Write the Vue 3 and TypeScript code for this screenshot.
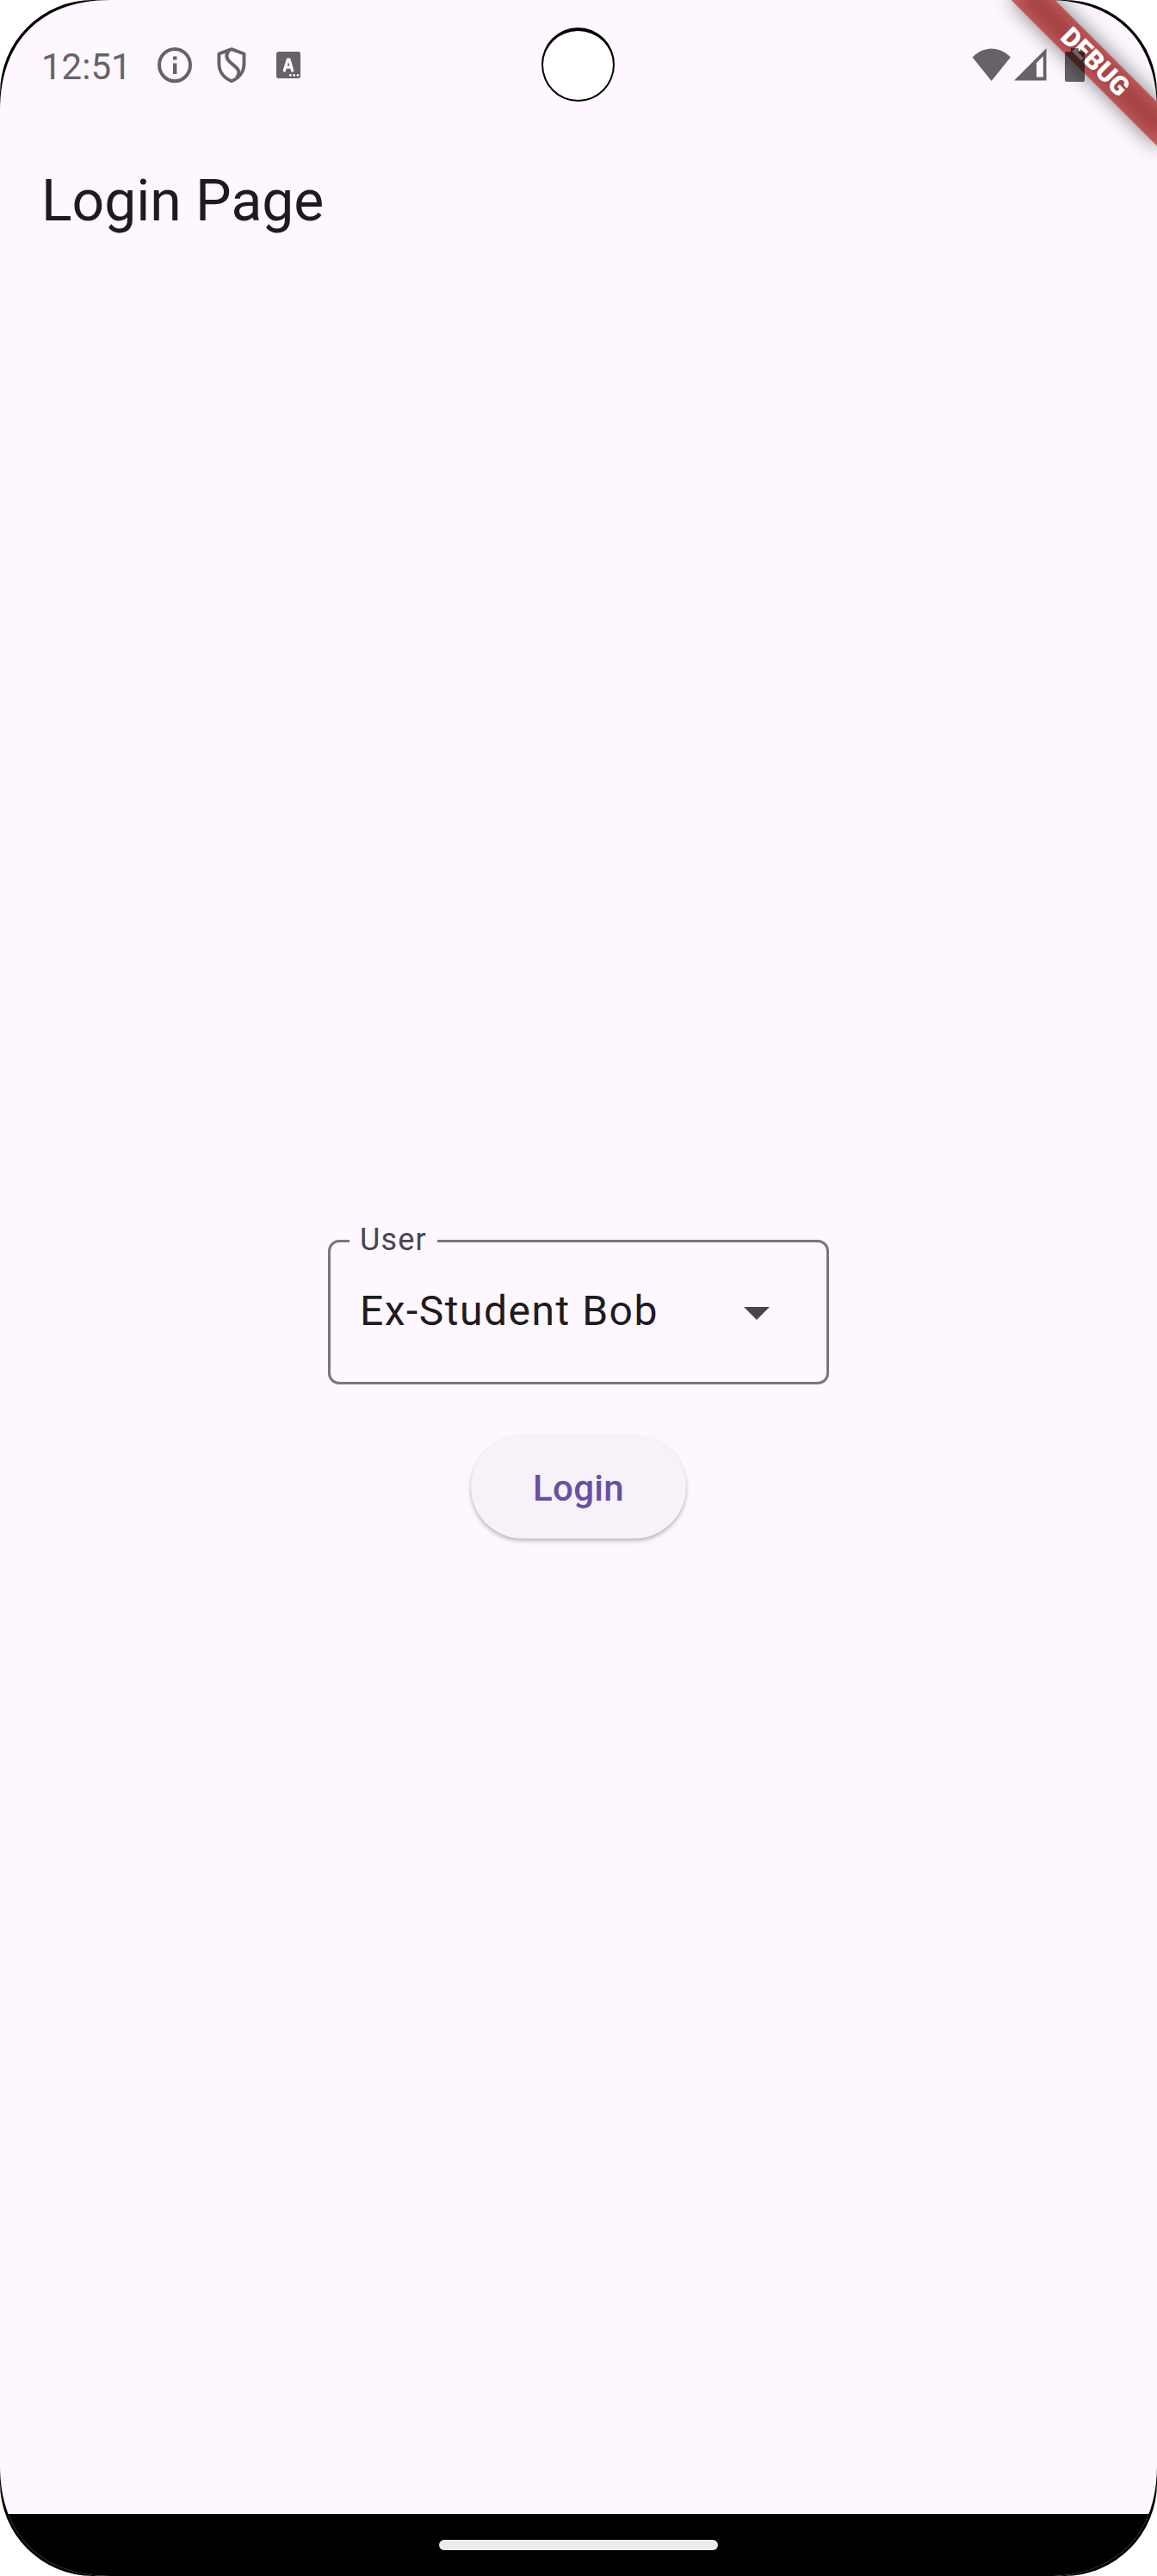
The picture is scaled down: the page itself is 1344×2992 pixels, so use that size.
<script setup lang="ts">
import { ref } from 'vue'

const time = ref('12:51')
const title = ref('Login Page')
const user = ref('Ex-Student Bob')
</script>

<template>
  <div class="device">
    <div class="screen">
      <header class="status">
        <div class="status-left">
          <span class="clock">{{ time }}</span>
          <svg class="info" viewBox="0 0 40 42" width="40" height="42">
            <ellipse cx="20" cy="20.6" rx="18" ry="18.6" fill="none" stroke="#666366" stroke-width="4" />
            <path d="M18 10.5h4.4v4H18zM18 18.5h4.4v12.6H18z" fill="#666366" />
          </svg>
          <svg class="shield" viewBox="0 0 34 42" width="34" height="42" fill="none" stroke="#666366" stroke-width="3.9" stroke-linejoin="round">
            <path d="M17 2.2 31.5 7.5V19C31.5 28 26 35.5 17 39.2 8 35.5 2.4 28 2.4 19V7.5Z" />
            <path d="M14 3.5C10.5 8 10 12.5 15 17L22 23C26.5 27 26.5 31 23 35" />
          </svg>
          <svg class="keyboard" viewBox="0 0 28 31" width="28" height="31">
            <rect width="28" height="31" rx="2.5" fill="#666366" />
            <path d="M9.3 22 13.3 9.2H15L18.7 22M10.6 18.2H17.5" fill="none" stroke="#fef7ff" stroke-width="3.3" stroke-linecap="round" stroke-linejoin="round" />
            <g fill="#fef7ff"><circle cx="16.3" cy="27.4" r="1.4" /><circle cx="20.6" cy="27.4" r="1.4" /><circle cx="24.9" cy="27.4" r="1.4" /></g>
          </svg>
        </div>
        <div class="status-right">
          <svg viewBox="0 0 46 38" width="46" height="38">
            <path d="M.6 10.5C13-3 32.5-3 44.9 10.5L22.7 38Z" fill="#666366" />
          </svg>
          <svg class="signal" viewBox="0 0 38 38" width="38" height="38">
            <path fill-rule="evenodd" d="M0 37.5 37.5 0V37.5ZM26 17V33.6H33.8V9.2Z" fill="#666366" />
          </svg>
          <svg class="battery" viewBox="0 0 23 39" width="23" height="39">
            <path d="M7 0H16V4H21Q23 4 23 6V37Q23 39 21 39H2Q0 39 0 37V6Q0 4 2 4H7Z" fill="#000" fill-opacity=".6" />
          </svg>
        </div>
      </header>

      <h1 class="title">{{ title }}</h1>

      <main class="form">
        <div class="field">
          <fieldset class="outline"><legend>User</legend>
            <div class="value">
              <span>{{ user }}</span>
              <svg viewBox="0 0 30 15" width="30" height="15"><path d="M0 0H30L15 15Z" fill="#49454f" /></svg>
            </div>
          </fieldset>
        </div>
        <button class="login" type="button">Login</button>
      </main>

      <footer class="nav"><span class="handle"></span></footer>

      <div class="banner">
        <div class="banner-shadow"></div>
        <div class="banner-band">DEBUG</div>
      </div>
    </div>
    <div class="camera"></div>
  </div>
</template>

<style>
body {
  background: #fff;
}
</style>

<style scoped>
.device {
  position: relative;
  width: 1344px;
  height: 2992px;
  overflow: hidden;
  background: #000;
  border-radius: 108px;
  font-family: Roboto, sans-serif;
}
.screen {
  position: relative;
  display: flex;
  flex-direction: column;
  height: 2992px;
  overflow: hidden;
  background: #fef7ff;
  clip-path: path("M0 128C0 48 48 0 128 0H1216C1296 0 1344 48 1344 128V2864C1344 2944 1296 2992 1216 2992H128C48 2992 0 2944 0 2864Z");
  isolation: isolate;
}
.status {
  position: relative;
  z-index: 2;
  display: flex;
  justify-content: space-between;
  height: 150px;
  padding: 0 84px 0 48px;
  box-sizing: border-box;
}
.status-left,
.status-right {
  display: flex;
  align-items: flex-start;
}
.clock {
  width: 135px;
  margin-top: 53px;
  color: #666366;
  font-size: 42px;
  line-height: 50px;
}
.info {
  margin-top: 55px;
}
.shield {
  margin: 55px 0 0 29px;
}
.keyboard {
  margin: 60px 0 0 35px;
}
.status-right {
  padding-top: 56px;
}
.signal {
  margin-left: 3px;
}
.battery {
  margin-left: 21px;
}
.title {
  margin: 44px 0 0 48px;
  color: #1d1b20;
  font-size: 66px;
  font-weight: 400;
  line-height: 80px;
}
.form {
  display: flex;
  flex: 1;
  flex-direction: column;
  align-items: center;
}
.field {
  width: 582px;
  margin-top: 1144px;
}
.outline {
  height: 190px;
  margin: 0;
  padding: 0 66px 0 34px;
  box-sizing: border-box;
  border: 3px solid #7a757f;
  border-radius: 13px;
}
.outline legend {
  margin-left: -12px;
  padding: 0 12px 2px;
  width: 102px;
  box-sizing: border-box;
  color: #49454f;
  font-size: 36px;
  line-height: 44px;
  letter-spacing: 1.125px;
}
.value {
  display: flex;
  align-items: center;
  justify-content: space-between;
  height: 117px;
  color: #1d1b20;
  font-size: 48px;
  line-height: 72px;
  letter-spacing: 1.5px;
  white-space: nowrap;
}
.value svg {
  margin-top: 6px;
}
.login {
  width: 250px;
  height: 120px;
  margin-top: 59px;
  padding: 4px 0 0;
  border: 0;
  border-radius: 60px;
  background: #f7f2fa;
  box-shadow: 0 3px 5px rgba(0, 0, 0, 0.24), 0 1px 2px rgba(0, 0, 0, 0.08);
  color: #6750a4;
  font: 500 42px/60px Roboto, sans-serif;
  letter-spacing: 0.3px;
}
.nav {
  display: flex;
  justify-content: center;
  height: 72px;
  background: #000;
}
.handle {
  width: 324px;
  height: 12px;
  margin-top: 30px;
  border-radius: 6px;
  background: #ebebeb;
}
.banner {
  position: absolute;
  z-index: 1;
  top: 54px;
  left: 1152px;
  width: 240px;
  height: 36px;
  transform: rotate(45deg);
}
.banner-shadow {
  position: absolute;
  inset: 0;
  background: rgba(0, 0, 0, 0.5);
  filter: blur(12px);
}
.banner-band {
  position: relative;
  height: 36px;
  background: rgba(183, 28, 28, 0.63);
  color: #fff;
  font-size: 30.6px;
  font-weight: 900;
  line-height: 36px;
  text-align: center;
}
.camera {
  position: absolute;
  top: 32px;
  left: 629px;
  width: 81px;
  height: 80px;
  border: solid #000;
  border-width: 4px 2.5px 2px;
  border-radius: 50%;
  background: #fff;
}
</style>
